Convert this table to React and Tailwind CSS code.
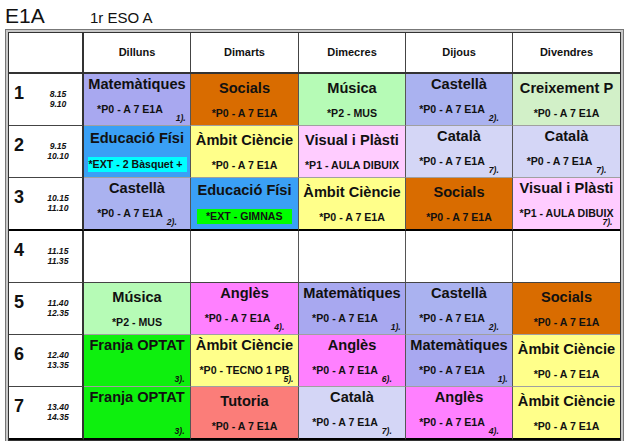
import React from "react";

const days = ["Dilluns", "Dimarts", "Dimecres", "Dijous", "Divendres"];
const widths = ["w-[107px]", "w-[108px]", "w-[107px]", "w-[107px]", "w-[107px]"];

const times = [
  ["8.15", "9.10"],
  ["9.15", "10.10"],
  ["10.15", "11.10"],
  ["11.15", "11.35"],
  ["11.40", "12.35"],
  ["12.40", "13.35"],
  ["13.40", "14.35"],
];

// subject colours
const MAT = "bg-[#a8a8f0]";
const CAS = "bg-[#aab2f0]";
const SOC = "bg-[#d96c00]";
const MUS = "bg-[#b6fbb6]";
const CRE = "bg-[#d2f0c8]";
const EF = "bg-[#3aa0f5]";
const AMB = "bg-[#ffff8a]";
const VIS = "bg-[#ffccff]";
const CAT = "bg-[#d4d6f6]";
const ANG = "bg-[#ff80ff]";
const OPT = "bg-[#0ef00e]";
const TUT = "bg-[#fb7d79]";

const A7 = "*P0 - A 7 E1A";
const AMBIT = "\u00c0mbit Ci\u00e8ncie";

const rows = [
  [
    { s: "Matemàtiques", r: A7, m: "1).", bg: MAT },
    { s: "Socials", r: A7, bg: SOC },
    { s: "Música", r: "*P2 - MUS", bg: MUS },
    { s: "Castellà", r: A7, m: "2).", bg: CAS },
    { s: "Creixement P", r: A7, bg: CRE },
  ],
  [
    { s: "Educació Físi", r: "*EXT - 2 Bàsquet +", bg: EF, hl: "bg-[#00ffff] w-[99px] pl-[1px]" },
    { s: AMBIT, r: A7, bg: AMB },
    { s: "Visual i Plàsti", r: "*P1 - AULA DIBUIX", bg: VIS },
    { s: "Català", r: A7, m: "7).", bg: CAT },
    { s: "Català", r: A7, m: "7).", bg: CAT },
  ],
  [
    { s: "Castellà", r: A7, m: "2).", bg: CAS },
    { s: "Educació Físi", r: "*EXT - GIMNAS", bg: EF, hl: "bg-[#00ff00] w-[95px] pl-[9px]" },
    { s: AMBIT, r: A7, bg: AMB },
    { s: "Socials", r: A7, bg: SOC },
    { s: "Visual i Plàsti", r: "*P1 - AULA DIBUIX", m: "7).", bg: VIS, wide: "w-[92px]" },
  ],
  null,
  [
    { s: "Música", r: "*P2 - MUS", bg: MUS },
    { s: "Anglès", r: A7, m: "4).", bg: ANG },
    { s: "Matemàtiques", r: A7, m: "1).", bg: MAT },
    { s: "Castellà", r: A7, m: "2).", bg: CAS },
    { s: "Socials", r: A7, bg: SOC },
  ],
  [
    { s: "Franja OPTAT", r: "", m: "3).", bg: OPT },
    { s: AMBIT, r: "*P0 - TECNO 1 PB", m: "5).", bg: AMB, wide: "w-[98px]" },
    { s: "Anglès", r: A7, m: "6).", bg: ANG },
    { s: "Matemàtiques", r: A7, m: "1).", bg: MAT },
    { s: AMBIT, r: A7, bg: AMB },
  ],
  [
    { s: "Franja OPTAT", r: "", m: "3).", bg: OPT },
    { s: "Tutoria", r: A7, bg: TUT },
    { s: "Català", r: A7, m: "7).", bg: CAT },
    { s: "Anglès", r: A7, m: "4).", bg: ANG },
    { s: AMBIT, r: A7, bg: AMB },
  ],
];

const thickRows = [2, 6];

const Subject = ({ c }) => (
  <div className={`flex flex-col items-center ${c.wide || ""}`}>
    <div className="text-[14.6px] leading-[17px] font-bold whitespace-nowrap">{c.s}</div>
    {c.hl ? (
      <div className={`mt-[10px] h-[15px] leading-[15px] text-[10.6px] font-bold whitespace-nowrap overflow-hidden text-left ${c.hl}`}>
        {c.r}
      </div>
    ) : (
      <div
        className={`mt-[10px] h-[12px] leading-[12px] text-[10.6px] font-bold whitespace-nowrap ${
          c.m && !c.wide ? "pr-[14px]" : ""
        }`}
      >
        {c.r}
      </div>
    )}
    {c.m && (
      <div className="self-stretch text-right -mt-[2px] h-[10px] leading-[10px] text-[8.6px] font-bold italic">
        {c.m}
      </div>
    )}
  </div>
);

export default function App() {
  return (
    <div className="w-[628px] h-[441px] overflow-hidden bg-white text-[#111] font-['Liberation_Sans',Arial,sans-serif]">
      {/* Title */}
      <div className="h-[29px] pl-[5px] pt-[4px] flex items-baseline">
        <span className="w-[85px] text-[21px] leading-[24px]">E1A</span>
        <span className="text-[15px] leading-[18px]">1r ESO A</span>
      </div>

      {/* Timetable frame */}
      <div className="ml-[5px] w-[619px] border border-[#777] bg-[#c8c8c8] p-[2px]">
        <div className="border border-[#333] bg-white">
          {/* Header */}
          <div className="flex h-[41px] border-b-2 border-b-[#333]">
            <div className="w-[75px] border-r-2 border-r-[#333]" />
            {days.map((d, i) => (
              <div
                key={d}
                className={`${widths[i]} ${i < 4 ? "border-r border-r-[#444]" : ""} flex items-center justify-center text-[11px] font-bold`}
              >
                {d}
              </div>
            ))}
          </div>

          {rows.map((row, ri) => {
            const thick = thickRows.includes(ri);
            const rowH = thick ? "h-[53px]" : "h-[52px]";
            const tb = thick ? "border-b-2 border-b-black" : "border-b border-b-[#444]";
            const sb = thick ? "border-b-2 border-b-black" : ri === 3 ? "border-b border-b-[#444]" : "border-b border-b-[#a0a0a0]";
            return (
              <div key={ri} className={`flex ${rowH}`}>
                <div className={`w-[75px] border-r-2 border-r-[#333] ${tb} flex pl-[5px] pt-[9px]`}>
                  <div className="w-[29px] text-[18px] leading-[20px] font-bold">{ri + 1}</div>
                  <div className="w-[30px] mt-[6px] text-center text-[8.6px] leading-[10px] font-bold italic">
                    <div>{times[ri][0]}</div>
                    <div>{times[ri][1]}</div>
                  </div>
                </div>
                {days.map((d, i) => {
                  const c = row ? row[i] : null;
                  return (
                    <div
                      key={d}
                      className={`${widths[i]} ${i < 4 ? "border-r border-r-[#555]" : ""} ${sb} ${
                        c ? c.bg : "bg-white"
                      } flex items-center justify-center pb-[1px] overflow-hidden`}
                    >
                      {c && <Subject c={c} />}
                    </div>
                  );
                })}
              </div>
            );
          })}
        </div>
      </div>
    </div>
  );
}
